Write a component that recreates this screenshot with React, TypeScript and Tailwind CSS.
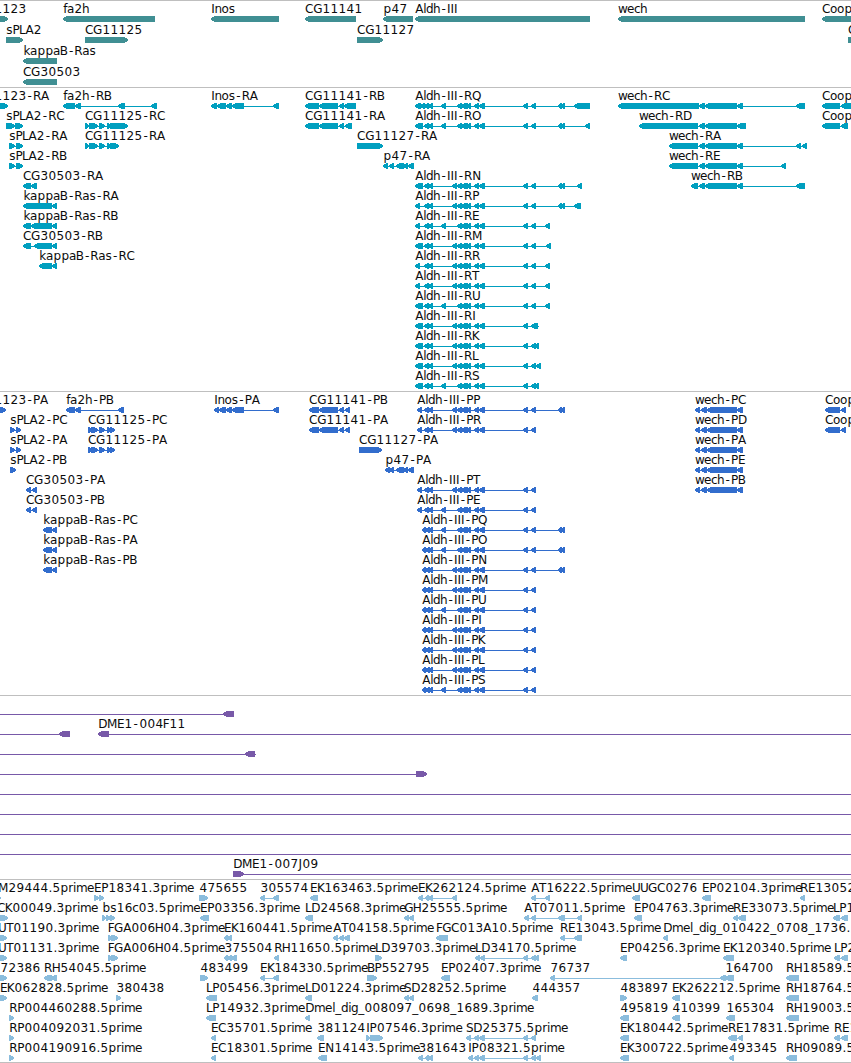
import React from "react";

type Direction = "<" | ">";

interface Feature {
  label: string;
  x: number;
  dir: Direction;
  /** Flat list of exon edges: start, end, start, end, ... */
  exons: number[];
  /** Extent of the connecting line when it runs past the exons. */
  span?: [number, number];
}

interface Track {
  name: string;
  fill: string;
  rowClass: string;
  padClass: string;
  rows: Feature[][];
}

const f = (label: string, x: number, dir: Direction, exons: number[], span?: [number, number]): Feature => ({
  label,
  x,
  dir,
  exons,
  span,
});

/* Label metrics: cell width of every character, and the glyph width inside it. */
const CELL: Record<string, number> = {
  A: 8, B: 7.3, C: 8, D: 9, E: 7, F: 6, G: 9, H: 8, I: 3.4, J: 4, K: 7, L: 6, M: 10, N: 9, O: 9, P: 7, Q: 9, R: 8,
  S: 7, T: 7, U: 8, a: 7, b: 8, c: 6, d: 7, e: 7, f: 4, g: 7, h: 7, i: 3, k: 7, l: 3, m: 11, n: 7, o: 7, p: 8,
  r: 5, s: 6.2, w: 9, "-": 6.9, ".": 4, _: 6,
};
const GLYPH: Record<string, number> = {
  A: 8.2, B: 8.2, C: 8.4, D: 9.2, E: 7.6, F: 6.9, G: 9.3, H: 9, I: 3.5, J: 3.5, K: 7.9, L: 6.7, M: 10.4, N: 9,
  O: 9.4, P: 7.2, Q: 9.4, R: 8.3, S: 7.6, T: 7.3, U: 8.8, a: 7.4, b: 7.6, c: 6.6, d: 7.6, e: 7.4, f: 4.2, g: 7.6,
  h: 7.6, i: 3.3, k: 6.9, l: 3.3, m: 11.7, n: 7.6, o: 7.3, p: 7.6, r: 4.9, s: 6.3, w: 9.8, "-": 4.3, ".": 3.8, _: 6,
};

function glyphPositions(label: string, x: number): string {
  let pen = x + 0.3;
  return Array.from(label)
    .map((ch) => {
      const cell = CELL[ch] ?? 8;
      const at = pen + (cell - (GLYPH[ch] ?? 7.6)) / 2;
      pen += cell;
      return at.toFixed(1);
    })
    .join(" ");
}

const E2 = [424, 429, 428, 433];
const X = [441, 446];
const M1 = [457, 462, 461, 466, 464, 468, 466, 471, 474, 479, 479, 485, 523, 528];
const M2 = [452, 457, ...M1];
const T = [531, 536];
const FAR = [558, 562, 560, 565];
const SHORT = [415, 420];
const LONG = [415, 423];
const P3 = [422, 426, 425, 430, 428, 433];
const WM = [699, 705, 705, 737, 737, 743];
const WP = [695, 700, 701, 707, 707, 737, 737, 743];
const CR = [85, 89, 89, 98, 99, 105, 107, 110];
const CP = [88, 92, 91, 98, 99, 105, 107, 111, 110, 115];
const CB = [305, 319, 319, 338, 339, 344];
const CBP = [309, 319, 319, 338, 339, 344, 345, 350];

const genes: Feature[][] = [
  [
    f("1123", -6, ">", [-10, 8]),
    f("fa2h", 63, "<", [63, 155]),
    f("Inos", 211, "<", [211, 279]),
    f("CG11141", 305, "<", [305, 356]),
    f("p47", 383, "<", [383, 413]),
    f("Aldh-III", 415, "<", [415, 590]),
    f("wech", 618, "<", [618, 805]),
    f("Coop", 822, "<", [822, 860]),
  ],
  [
    f("sPLA2", 6, ">", [6, 23]),
    f("CG11125", 85, ">", [85, 128]),
    f("CG11127", 357, ">", [357, 383]),
    f("C", 848, ">", [848, 870]),
  ],
  [f("kappaB-Ras", 23, "<", [23, 57])],
  [f("CG30503", 23, "<", [23, 57])],
];

const transcripts: Feature[][] = [
  [
    f("1123-RA", -6, ">", [-5, 8]),
    f("fa2h-RB", 63, "<", [63, 75, 75, 81, 118, 125, 151, 157]),
    f("Inos-RA", 211, "<", [211, 217, 217, 226, 226, 232, 232, 244, 273, 279]),
    f("CG11141-RB", 305, "<", [...CB, 344, 356]),
    f("Aldh-III-RQ", 415, "<", [415, 421, 420, 425, ...E2, ...X, ...M1, ...T, ...FAR, 574, 590]),
    f("wech-RC", 618, "<", [618, 699, ...WM, 796, 805]),
    f("Coop", 822, "<", [822, 840, 841, 860]),
  ],
  [
    f("sPLA2-RC", 6, ">", [6, 15, 15, 23]),
    f("CG11125-RC", 85, ">", [...CR, 110, 128]),
    f("CG11141-RA", 305, "<", [...CB, 345, 352]),
    f("Aldh-III-RO", 415, "<", [...LONG, ...E2, ...X, ...M1, ...T, ...FAR, 585, 590]),
    f("wech-RD", 639, "<", [639, 698, 699, 705, 705, 737, 737, 746]),
    f("Coop", 822, "<", [822, 840, 841, 848]),
  ],
  [
    f("sPLA2-RA", 9, ">", [9, 15, 16, 23]),
    f("CG11125-RA", 85, ">", [...CR, 110, 119]),
    f("CG11127-RA", 357, ">", [357, 383]),
    f("wech-RA", 669, "<", [669, 698, ...WM, 796, 801, 802, 807]),
  ],
  [
    f("sPLA2-RB", 9, ">", [9, 15, 16, 23]),
    f("p47-RA", 383, "<", [383, 388, 389, 394, 396, 404, 403, 408, 408, 414]),
    f("wech-RE", 669, "<", [669, 698, ...WM, 781, 786]),
  ],
  [
    f("CG30503-RA", 23, "<", [23, 31, 31, 37]),
    f("Aldh-III-RN", 415, "<", [...LONG, ...E2, ...M2, ...T, ...FAR, 577, 582]),
    f("wech-RB", 691, "<", [691, 698, ...WM, 796, 805]),
  ],
  [
    f("kappaB-Ras-RA", 23, "<", [23, 52, 52, 57]),
    f("Aldh-III-RP", 415, "<", [...SHORT, ...E2, ...M2, ...T, ...FAR, 574, 581]),
  ],
  [
    f("kappaB-Ras-RB", 23, "<", [23, 31, 31, 52, 52, 57]),
    f("Aldh-III-RE", 415, "<", [...SHORT, ...E2, ...X, ...M1, ...T, 545, 550]),
  ],
  [
    f("CG30503-RB", 23, "<", [23, 31, 34, 52, 52, 57]),
    f("Aldh-III-RM", 415, "<", [...LONG, ...E2, ...M2, ...T, 546, 551]),
  ],
  [
    f("kappaB-Ras-RC", 39, "<", [39, 52, 52, 57]),
    f("Aldh-III-RR", 415, "<", [...SHORT, ...E2, ...M2, ...T, 545, 550]),
  ],
  [f("Aldh-III-RT", 415, "<", [...SHORT, ...E2, ...M2, ...T, 545, 550])],
  [f("Aldh-III-RU", 415, "<", [...LONG, ...E2, ...X, ...M1, ...T, 545, 550])],
  [f("Aldh-III-RI", 415, "<", [...LONG, ...E2, ...M2, 531, 538], [415, 539])],
  [f("Aldh-III-RK", 415, "<", [...LONG, ...E2, ...M2, ...T, 534, 539])],
  [f("Aldh-III-RL", 415, "<", [...LONG, ...E2, ...M2, ...T, 536, 541])],
  [f("Aldh-III-RS", 415, "<", [...LONG, ...E2, ...X, ...M1, ...T, 534, 539])],
];

const proteins: Feature[][] = [
  [
    f("1123-PA", -6, ">", [-5, 6]),
    f("fa2h-PB", 66, "<", [66, 75, 75, 81, 118, 124]),
    f("Inos-PA", 214, "<", [214, 219, 219, 226, 226, 232, 232, 244, 273, 279]),
    f("CG11141-PB", 309, "<", CBP),
    f("Aldh-III-PP", 417, "<", [417, 422, ...E2, ...M2, ...T, ...FAR]),
    f("wech-PC", 695, "<", WP),
    f("Coop", 825, "<", [825, 840, 841, 846]),
  ],
  [
    f("sPLA2-PC", 10, ">", [10, 15, 16, 21]),
    f("CG11125-PC", 88, ">", CP),
    f("CG11141-PA", 309, "<", CBP),
    f("Aldh-III-PR", 417, "<", [417, 422, ...E2, ...M2, ...T]),
    f("wech-PD", 695, "<", WP),
    f("Coop", 825, "<", [825, 840, 841, 846]),
  ],
  [
    f("sPLA2-PA", 10, ">", [10, 15, 16, 21]),
    f("CG11125-PA", 88, ">", CP),
    f("CG11127-PA", 359, ">", [359, 382]),
    f("wech-PA", 695, "<", WP),
  ],
  [
    f("sPLA2-PB", 10, ">", [10, 16]),
    f("p47-PA", 385, "<", [385, 390, 389, 394, 396, 404, 403, 408, 408, 414]),
    f("wech-PE", 695, "<", WP),
  ],
  [
    f("CG30503-PA", 26, "<", [26, 31, 32, 37]),
    f("Aldh-III-PT", 417, "<", [417, 422, ...E2, ...M2, ...T]),
    f("wech-PB", 695, "<", WP),
  ],
  [
    f("CG30503-PB", 26, "<", [26, 31, 32, 37]),
    f("Aldh-III-PE", 417, "<", [417, 422, ...E2, ...X, ...M1, ...T]),
  ],
  [
    f("kappaB-Ras-PC", 43, "<", [43, 52, 52, 57]),
    f("Aldh-III-PQ", 422, "<", [...P3, ...X, ...M1, ...T, ...FAR]),
  ],
  [
    f("kappaB-Ras-PA", 43, "<", [43, 52, 52, 57]),
    f("Aldh-III-PO", 422, "<", [...P3, ...X, ...M1, ...T, ...FAR]),
  ],
  [
    f("kappaB-Ras-PB", 43, "<", [43, 52, 52, 57]),
    f("Aldh-III-PN", 422, "<", [...P3, ...M2, ...T, ...FAR]),
  ],
  [f("Aldh-III-PM", 422, "<", [...P3, ...M2, ...T])],
  [f("Aldh-III-PU", 422, "<", [...P3, ...X, ...M1, ...T])],
  [f("Aldh-III-PI", 422, "<", [...P3, ...M2, ...T])],
  [f("Aldh-III-PK", 422, "<", [...P3, ...M2, ...T])],
  [f("Aldh-III-PL", 422, "<", [...P3, ...M2, ...T])],
  [f("Aldh-III-PS", 422, "<", [...P3, ...X, ...M1, ...T])],
];

const through = f("", 0, "<", [], [0, 851]);

const clones: Feature[][] = [
  [f("", 0, "<", [223, 234], [0, 234])],
  [f("", 0, "<", [59, 70], [0, 70]), f("DME1-004F11", 98, "<", [98, 109], [98, 851])],
  [f("", 0, "<", [245, 255], [0, 256])],
  [f("", 0, ">", [416, 427], [0, 427])],
  [through],
  [through],
  [through],
  [through],
  [f("DME1-007J09", 233, ">", [233, 244], [233, 851])],
];

const ests: Feature[][] = [
  [
    f("M29444.5prime", -2, ">", [-4, 1]),
    f("EP18341.3prime", 94, ">", [94, 99, 99, 104]),
    f("475655", 199, ">", [199, 208]),
    f("305574", 260, "<", [260, 265, 273, 279]),
    f("EK163463.5prime", 310, "<", [310, 318]),
    f("EK262124.5prime", 418, "<", [418, 423, 425, 429, 428, 433, 452, 457]),
    f("AT16222.5prime", 531, "<", [531, 536, 545, 550]),
    f("UUGC0276", 632, "<", [632, 640]),
    f("EP02104.3prime", 702, "<", [702, 711]),
    f("RE13052", 800, "<", [800, 805]),
  ],
  [
    f("CK00049.3prime", -3, ">", [0, 8]),
    f("bs16c03.5prime", 102, ">", [102, 106, 106, 111, 110, 115]),
    f("EP03356.3prime", 200, "<", [200, 209]),
    f("LD24568.3prime", 305, "<", [305, 313]),
    f("GH25555.5prime", 404, "<", [404, 409, 409, 414]),
    f("AT07011.5prime", 524, "<", [524, 529, 531, 536, 558, 565, 577, 582]),
    f("EP04763.3prime", 634, "<", [634, 642]),
    f("RE33073.5prime", 733, "<", [733, 738, 738, 746]),
    f("LP1", 833, "<", [833, 840, 841, 848]),
  ],
  [
    f("UT01190.3prime", -2, ">", [0, 7]),
    f("FGA006H04.3prime", 108, ">", [108, 112, 111, 118]),
    f("EK160441.5prime", 224, "<", [224, 228, 227, 232]),
    f("AT04158.5prime", 333, "<", [333, 338, 339, 344, 344, 350]),
    f("FGC013A10.5prime", 436, "<", [436, 448]),
    f("RE13043.5prime", 560, "<", [560, 565, 574, 582]),
    f("Dmel_dig_010422_0708_1736.", 663, "<", [663, 668]),
  ],
  [
    f("UT01131.3prime", -2, ">", [0, 7]),
    f("FGA006H04.5prime", 108, ">", [108, 112, 111, 118]),
    f("375504", 224, "<", [224, 228, 227, 232, 231, 237]),
    f("RH11650.5prime", 274, "<", [274, 279]),
    f("LD39703.3prime", 375, ">", [375, 382]),
    f("LD34170.5prime", 475, "<", [475, 480, 480, 485, 523, 528, 531, 536, 535, 539]),
    f("EP04256.3prime", 620, "<", [620, 627]),
    f("EK120340.5prime", 723, "<", [723, 734]),
    f("LP2", 834, "<", [834, 840, 841, 848]),
  ],
  [
    f("72386", 0, ">", [0, 7]),
    f("RH54045.5prime", 44, "<", [44, 52, 51, 57]),
    f("483499", 200, ">", [200, 208]),
    f("EK184330.5prime", 260, "<", [260, 265, 273, 279]),
    f("BP552795", 367, ">", [367, 377]),
    f("EP02407.3prime", 441, "<", [441, 450]),
    f("76737", 550, "<", [550, 555, 720, 726]),
    f("164700", 725, "<", [725, 734]),
    f("RH18589.5", 786, "<", [786, 799]),
  ],
  [
    f("EK062828.5prime", 0, ">", [0, 7]),
    f("380438", 116, ">", [116, 121]),
    f("LP05456.3prime", 206, "<", [206, 217]),
    f("LD01224.3prime", 305, "<", [305, 312]),
    f("SD28252.5prime", 404, "<", [404, 409, 409, 414]),
    f("444357", 532, "<", [532, 538]),
    f("483897", 620, ">", [620, 627]),
    f("EK262212.5prime", 672, "<", [672, 680]),
    f("RH18764.5", 786, "<", [786, 799]),
  ],
  [
    f("RP004460288.5prime", 9, ">", [9, 14]),
    f("LP14932.3prime", 206, "<", [206, 216]),
    f("Dmel_dig_008097_0698_1689.3prime", 305, "<", [305, 310]),
    f("495819", 620, "<", [620, 629]),
    f("410399", 672, "<", [672, 680]),
    f("165304", 726, "<", [726, 735]),
    f("RH19003.5", 786, "<", [786, 799]),
  ],
  [
    f("RP004092031.5prime", 9, ">", [9, 14]),
    f("EC35701.5prime", 211, "<", [211, 216]),
    f("381124", 317, "<", [317, 324]),
    f("IP07546.3prime", 366, ">", [366, 370, 370, 383]),
    f("SD25375.5prime", 466, "<", [466, 471, 474, 479, 479, 485, 523, 528, 531, 536]),
    f("EK180442.5prime", 620, "<", [620, 629]),
    f("RE17831.5prime", 728, "<", [728, 737, 738, 743]),
    f("RE1", 834, "<", [834, 840, 841, 848]),
  ],
  [
    f("RP004190916.5prime", 9, ">", [9, 14]),
    f("EC18301.5prime", 211, "<", [211, 216]),
    f("EN14143.5prime", 318, "<", [318, 327]),
    f("381643", 418, "<", [418, 423, 425, 429, 428, 433]),
    f("IP08321.5prime", 468, "<", [468, 473, 474, 479, 479, 485, 523, 528, 531, 536, 536, 541]),
    f("EK300722.5prime", 620, "<", [620, 629]),
    f("493345", 729, "<", [729, 734]),
    f("RH09089.5", 786, "<", [786, 797]),
  ],
];

const tracks: Track[] = [
  { name: "genes", fill: "fill-[#408f93]", rowClass: "h-[21px]", padClass: "pb-0.5", rows: genes },
  { name: "transcripts", fill: "fill-[#009fbf]", rowClass: "h-5", padClass: "pb-[3px]", rows: transcripts },
  { name: "proteins", fill: "fill-[#326dcd]", rowClass: "h-5", padClass: "pb-[3px]", rows: proteins },
  { name: "clones", fill: "fill-[#7859a8]", rowClass: "h-5", padClass: "pb-[3px]", rows: clones },
  { name: "ests", fill: "fill-[#8bbddd]", rowClass: "h-5", padClass: "pb-0.5", rows: ests },
];

function Exon({ start, end, dir }: { start: number; end: number; dir: Direction }) {
  const head = Math.min(end - start, 5);
  const mid = head * 0.3;
  const points =
    dir === "<"
      ? `${start},17 ${start + mid},16 ${start + head - 1},15 ${end},15 ${end},21 ${start + head - 1},21 ${start + mid},20 ${start},19`
      : `${end},17 ${end - mid},16 ${end - head + 1},15 ${start},15 ${start},21 ${end - head + 1},21 ${end - mid},20 ${end},19`;
  return <polygon points={points} />;
}

function FeatureGlyph({ feature }: { feature: Feature }) {
  const { exons, span, dir, label, x } = feature;
  const from = span ? span[0] : Math.min(...exons);
  const to = span ? span[1] : Math.max(...exons);
  const pairs: [number, number][] = [];
  for (let i = 0; i < exons.length; i += 2) pairs.push([exons[i], exons[i + 1]]);
  return (
    <g>
      <rect x={from} y={18} width={to - from} height={1} />
      {pairs.map(([s, e], i) => (
        <Exon key={i} start={s} end={e} dir={dir} />
      ))}
      {label && (
        <text x={glyphPositions(label, x)} y={12} className="fill-[#0c0c0c]">
          {label}
        </text>
      )}
    </g>
  );
}

function TrackPanel({ track }: { track: Track }) {
  return (
    <section aria-label={track.name} className={`flex flex-col border-t border-[#bfbfbf] ${track.padClass}`}>
      {track.rows.map((row, i) => (
        <svg
          key={i}
          shapeRendering="crispEdges"
          className={`block w-full shrink-0 overflow-visible ${track.rowClass} ${track.fill}`}
        >
          {row.map((feature, j) => (
            <FeatureGlyph key={j} feature={feature} />
          ))}
        </svg>
      ))}
    </section>
  );
}

export default function App() {
  return (
    <main className="flex h-[1063px] w-[851px] flex-col overflow-hidden border-b border-[#bfbfbf] bg-white font-['DejaVu_Sans',sans-serif] text-[12px]">
      {tracks.map((track) => (
        <TrackPanel key={track.name} track={track} />
      ))}
    </main>
  );
}
